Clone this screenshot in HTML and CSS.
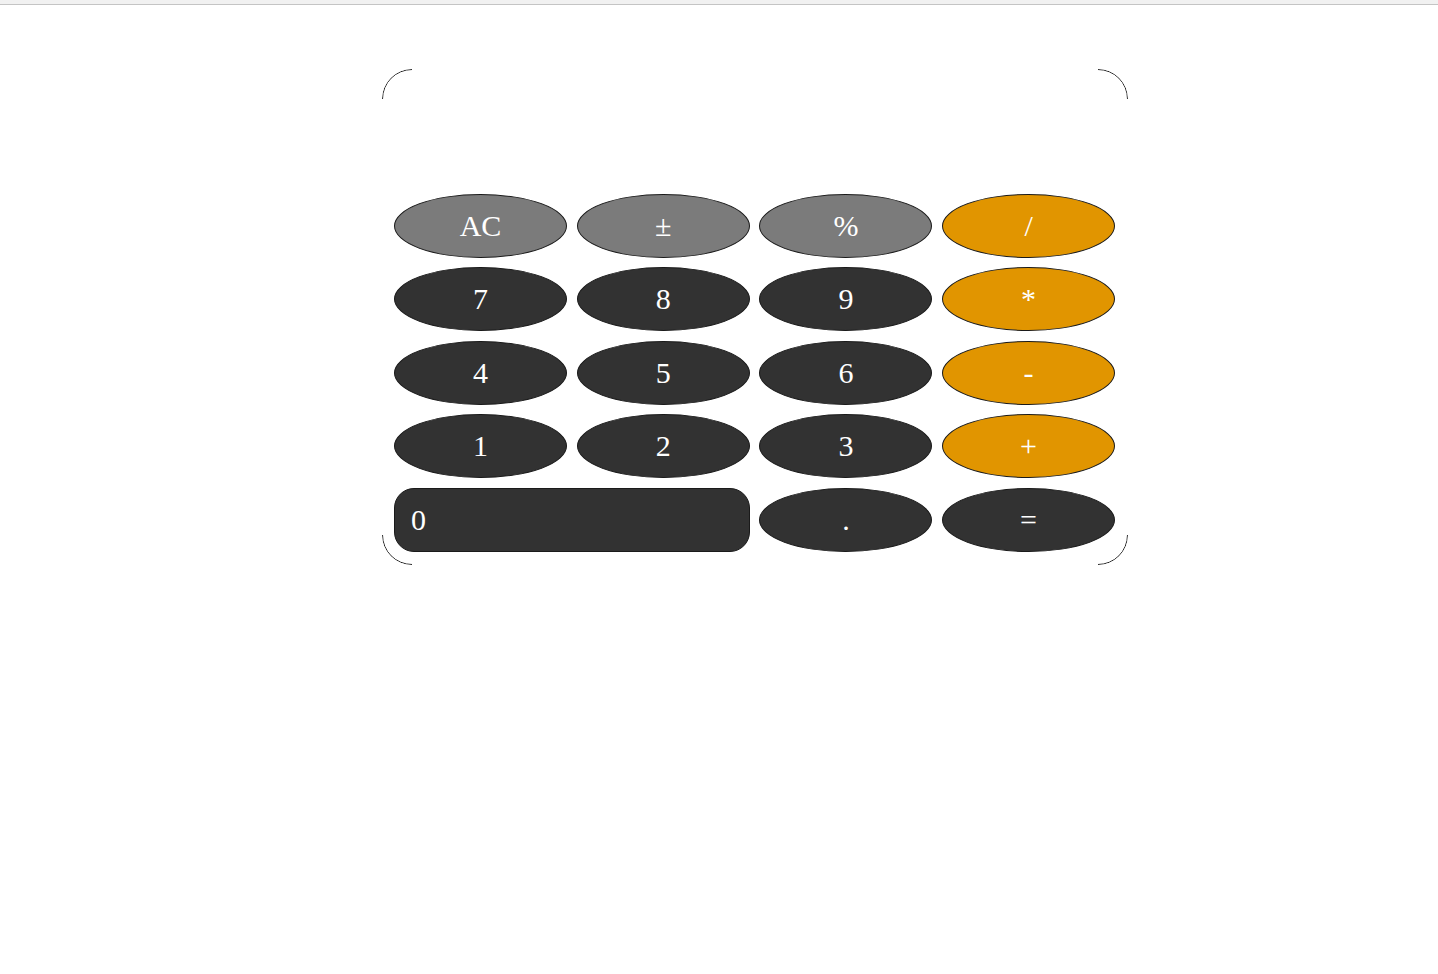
FILE: index.html
```html
<!DOCTYPE html>
<html>
<head>
<meta charset="utf-8">
<title>Calculator</title>
<link rel="stylesheet" href="styles.css">
</head>
<body>
<div class="topbar"></div>
<div class="calculator">
  <div class="display"></div>
  <div class="keys">
    <button class="key fn">AC</button>
    <button class="key fn">±</button>
    <button class="key fn">%</button>
    <button class="key op">/</button>
    <button class="key num">7</button>
    <button class="key num">8</button>
    <button class="key num">9</button>
    <button class="key op">*</button>
    <button class="key num">4</button>
    <button class="key num">5</button>
    <button class="key num">6</button>
    <button class="key op">-</button>
    <button class="key num">1</button>
    <button class="key num">2</button>
    <button class="key num">3</button>
    <button class="key op">+</button>
    <button class="key num zero">0</button>
    <button class="key num">.</button>
    <button class="key num">=</button>
  </div>
</div>
</body>
</html>
```
FILE: styles.css
```css
html, body {
  margin: 0;
  padding: 0;
  background: #fff;
  font-family: "Liberation Serif", "Times New Roman", serif;
}

.topbar {
  height: 4px;
  background: #f1f1f1;
  border-bottom: 1px solid #c4c4c4;
}

.calculator {
  position: relative;
  width: 746px;
  height: 496px;
  margin: 64px 0 0 382px;
  box-sizing: border-box;
  padding: 12px 12px 13px 12px;
  display: flex;
  flex-direction: column;
}

.calculator::before {
  content: "";
  position: absolute;
  inset: 0;
  border: 1px solid #222;
  border-radius: 30px;
  pointer-events: none;
  -webkit-mask:
    linear-gradient(#000 0 0) top left / 30px 30px no-repeat,
    linear-gradient(#000 0 0) top right / 30px 30px no-repeat,
    linear-gradient(#000 0 0) bottom left / 30px 30px no-repeat,
    linear-gradient(#000 0 0) bottom right / 30px 30px no-repeat;
  mask:
    linear-gradient(#000 0 0) top left / 30px 30px no-repeat,
    linear-gradient(#000 0 0) top right / 30px 30px no-repeat,
    linear-gradient(#000 0 0) bottom left / 30px 30px no-repeat,
    linear-gradient(#000 0 0) bottom right / 30px 30px no-repeat;
}

.display {
  flex: 1;
}

.keys {
  display: grid;
  grid-template-columns: repeat(4, 173px);
  grid-auto-rows: 64px;
  column-gap: 9.7px;
  row-gap: 9.6px;
}

.key {
  margin: 0;
  padding: 0;
  border: 1px solid #1a1a1a;
  border-radius: 50%;
  font-family: "Liberation Serif", "Times New Roman", serif;
  font-size: 30px;
  color: #fff;
  cursor: pointer;
  line-height: 1;
}

.fn { background: #7b7b7b; }
.num { background: #323232; }
.op { background: #e19500; }

.zero {
  grid-column: span 2;
  border-radius: 20px;
  text-align: left;
  padding-left: 16px;
}
```
